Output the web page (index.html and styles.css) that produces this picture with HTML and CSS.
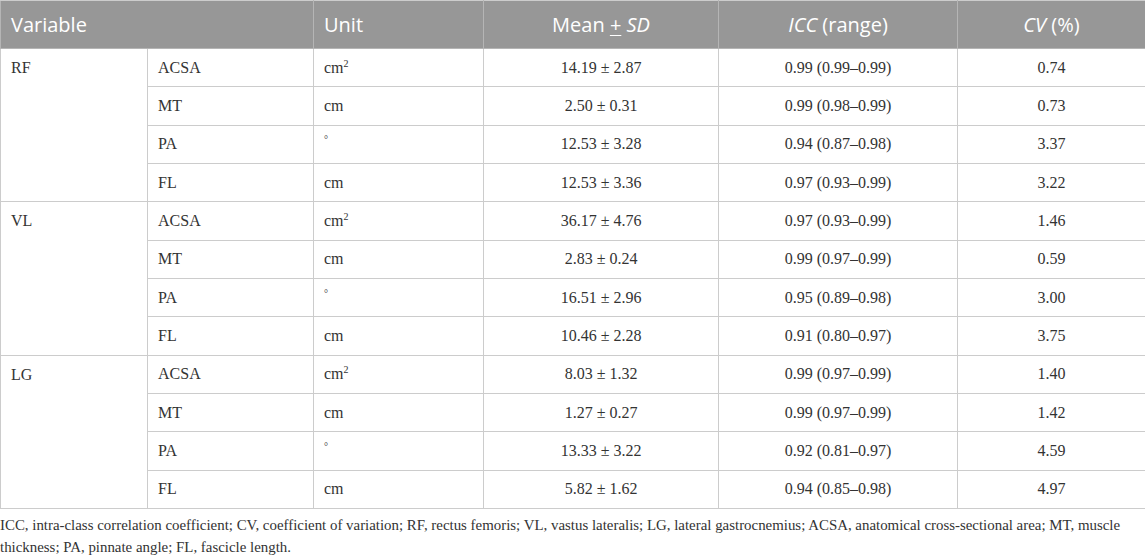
FILE: index.html
```html
<!DOCTYPE html>
<html>
<head>
<meta charset="utf-8">
<link rel="stylesheet" href="styles.css">
</head>
<body>
<div class="wrap">
<table class="data">
<colgroup>
<col class="c1"><col class="c2"><col class="c3"><col class="c4"><col class="c5"><col class="c6">
</colgroup>
<thead>
<tr class="head">
<th colspan="2" class="left">Variable</th>
<th class="left">Unit</th>
<th>Mean <u>+</u> <i>SD</i></th>
<th><i>ICC</i> (range)</th>
<th><i>CV</i> (%)</th>
</tr>
</thead>
<tbody>
<tr><td rowspan="4" class="grp">RF</td><td>ACSA</td><td>cm<sup>2</sup></td><td class="ctr">14.19 ± 2.87</td><td class="ctr">0.99 (0.99–0.99)</td><td class="ctr">0.74</td></tr>
<tr><td>MT</td><td>cm</td><td class="ctr">2.50 ± 0.31</td><td class="ctr">0.99 (0.98–0.99)</td><td class="ctr">0.73</td></tr>
<tr><td>PA</td><td><sup>°</sup></td><td class="ctr">12.53 ± 3.28</td><td class="ctr">0.94 (0.87–0.98)</td><td class="ctr">3.37</td></tr>
<tr><td>FL</td><td>cm</td><td class="ctr">12.53 ± 3.36</td><td class="ctr">0.97 (0.93–0.99)</td><td class="ctr">3.22</td></tr>
<tr><td rowspan="4" class="grp">VL</td><td>ACSA</td><td>cm<sup>2</sup></td><td class="ctr">36.17 ± 4.76</td><td class="ctr">0.97 (0.93–0.99)</td><td class="ctr">1.46</td></tr>
<tr><td>MT</td><td>cm</td><td class="ctr">2.83 ± 0.24</td><td class="ctr">0.99 (0.97–0.99)</td><td class="ctr">0.59</td></tr>
<tr><td>PA</td><td><sup>°</sup></td><td class="ctr">16.51 ± 2.96</td><td class="ctr">0.95 (0.89–0.98)</td><td class="ctr">3.00</td></tr>
<tr><td>FL</td><td>cm</td><td class="ctr">10.46 ± 2.28</td><td class="ctr">0.91 (0.80–0.97)</td><td class="ctr">3.75</td></tr>
<tr><td rowspan="4" class="grp">LG</td><td>ACSA</td><td>cm<sup>2</sup></td><td class="ctr">8.03 ± 1.32</td><td class="ctr">0.99 (0.97–0.99)</td><td class="ctr">1.40</td></tr>
<tr><td>MT</td><td>cm</td><td class="ctr">1.27 ± 0.27</td><td class="ctr">0.99 (0.97–0.99)</td><td class="ctr">1.42</td></tr>
<tr><td>PA</td><td><sup>°</sup></td><td class="ctr">13.33 ± 3.22</td><td class="ctr">0.92 (0.81–0.97)</td><td class="ctr">4.59</td></tr>
<tr><td>FL</td><td>cm</td><td class="ctr">5.82 ± 1.62</td><td class="ctr">0.94 (0.85–0.98)</td><td class="ctr">4.97</td></tr>
</tbody>
</table>
<p class="note">ICC, intra-class correlation coefficient; CV, coefficient of variation; RF, rectus femoris; VL, vastus lateralis; LG, lateral gastrocnemius; ACSA, anatomical cross-sectional area; MT, muscle thickness; PA, pinnate angle; FL, fascicle length.</p>
</div>
</body>
</html>
```

FILE: styles.css
```css
html, body {
  margin: 0;
  padding: 0;
  background: #ffffff;
}

.wrap {
  width: 1145px;
}

.data {
  width: 1145px;
  border-collapse: collapse;
  table-layout: fixed;
  border: 1px solid #cccccc;
  font-family: "Liberation Serif", "Times New Roman", serif;
  font-size: 16px;
  color: #333333;
}

.c1 { width: 147px; }
.c2 { width: 166px; }
.c3 { width: 170px; }
.c4 { width: 235px; }
.c5 { width: 239px; }
.c6 { width: 188px; }

.head {
  height: 48px;
  background: #979797;
}

.head th {
  font-family: "Open Sans", "Noto Sans", sans-serif;
  font-weight: normal;
  font-size: 20px;
  color: #ffffff;
  text-align: center;
  padding: 0 10px;
  border: 1px solid #b5b5b5;
  border-top: 1px solid #cccccc;
}

.head th.left {
  text-align: left;
}

.head u {
  text-decoration-thickness: 1px;
  text-underline-offset: 3px;
}

tbody tr {
  height: 38.35px;
}

tbody td {
  border: 1px solid #cccccc;
  padding: 0 10px;
  text-align: left;
  vertical-align: middle;
  line-height: 18px;
}

tbody td.grp {
  vertical-align: top;
  padding-top: 10px;
}

tbody td.ctr {
  text-align: center;
}

sup {
  font-size: 10px;
  line-height: 0;
  vertical-align: 6px;
}

.note {
  margin: 5px 0 0 0;
  font-family: "Liberation Serif", "Times New Roman", serif;
  font-size: 14.9px;
  line-height: 22px;
  color: #333333;
}
```
